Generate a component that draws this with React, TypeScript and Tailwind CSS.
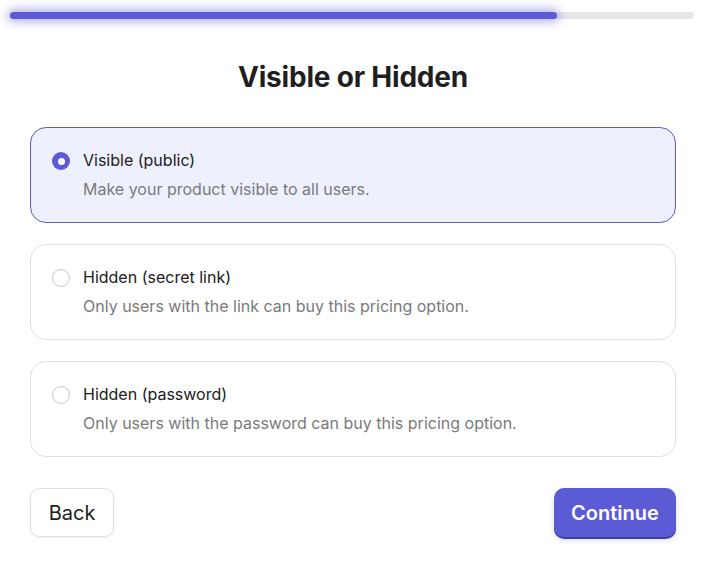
import React, { useState } from "react";

const options = [
  { id: "public", title: "Visible (public)", desc: "Make your product visible to all users." },
  { id: "secret", title: "Hidden (secret link)", desc: "Only users with the link can buy this pricing option." },
  { id: "password", title: "Hidden (password)", desc: "Only users with the password can buy this pricing option." },
];

export default function App() {
  const [selected, setSelected] = useState("public");

  return (
    <div className="w-[706px] h-[569px] bg-white font-['Inter',sans-serif] text-[#1f1f1f]">
      {/* progress */}
      <div className="pl-[10px] pr-[12px] pt-3">
        <div className="h-[7px] w-full rounded-full bg-[#e6e6e6]">
          <div className="h-full w-[80%] rounded-full bg-[#5b5bd6] shadow-[0_0_10px_3px_rgba(91,91,214,0.45)]" />
        </div>
      </div>

      <h1 className="mt-[40px] text-center text-[28px] font-bold leading-[36px] tracking-[-0.2px]">
        Visible or Hidden
      </h1>

      <div className="mx-[30px] mt-[32px] flex flex-col gap-[21px]">
        {options.map((o) => {
          const active = selected === o.id;
          return (
            <button
              key={o.id}
              onClick={() => setSelected(o.id)}
              className={
                active
                  ? "flex h-[96px] items-start gap-[13px] rounded-[16px] border border-[#5b5bd6] bg-[#eff0fe] px-[21px] pt-[20px] text-left"
                  : "flex h-[96px] items-start gap-[13px] rounded-[16px] border border-[#e0e0e0] bg-white px-[21px] pt-[20px] text-left"
              }
            >
              <span
                className={
                  active
                    ? "mt-[4px] flex h-[18px] w-[18px] shrink-0 items-center justify-center rounded-full bg-[#5b5bd6]"
                    : "mt-[4px] h-[18px] w-[18px] shrink-0 rounded-full border border-[#c8c8c8] bg-white"
                }
              >
                {active && <span className="h-[7px] w-[7px] rounded-full bg-white" />}
              </span>
              <span className="flex flex-col">
                <span className="text-[16px] leading-[24px] text-[#202020]">{o.title}</span>
                <span className="mt-[5px] text-[16px] leading-[24px] text-[#7a7a7a]">{o.desc}</span>
              </span>
            </button>
          );
        })}
      </div>

      <div className="mx-[30px] mt-[31px] flex items-center justify-between">
        <button className="h-[49px] w-[84px] rounded-[10px] border border-[#e0e0e0] bg-white text-[20px] text-[#202020] shadow-[0_1px_3px_rgba(0,0,0,0.08)]">
          Back
        </button>
        <button className="h-[49px] w-[122px] rounded-[10px] bg-[#5b5bd6] text-[20px] font-semibold text-white shadow-[0_2px_0_#4040a8,0_3px_6px_rgba(0,0,0,0.15)]">
          Continue
        </button>
      </div>
    </div>
  );
}
